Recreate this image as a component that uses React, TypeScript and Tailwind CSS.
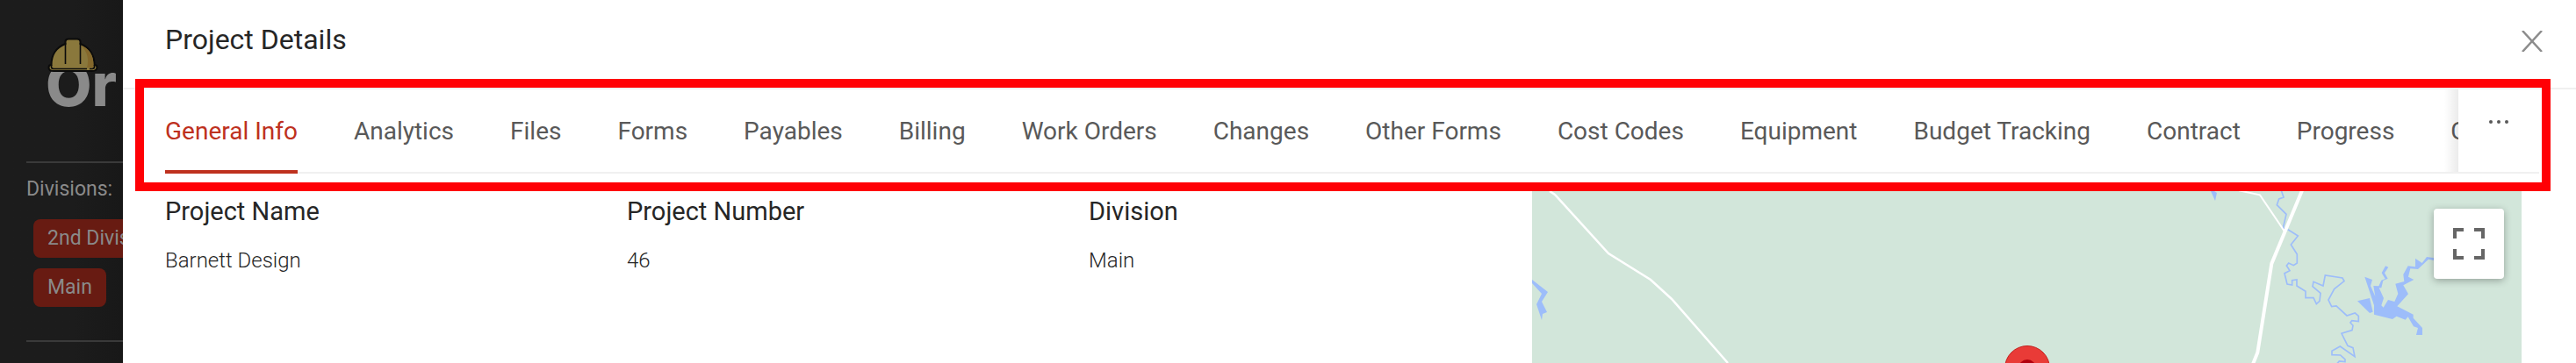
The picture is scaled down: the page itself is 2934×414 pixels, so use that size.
const tabs = ['General Info', 'Analytics', 'Files', 'Forms', 'Payables', 'Billing', 'Work Orders', 'Changes', 'Other Forms', 'Cost Codes', 'Equipment', 'Budget Tracking', 'Contract', 'Progress', 'Change Orders']

const fields = [
  { label: 'Project Name', value: 'Barnett Design' },
  { label: 'Project Number', value: '46' },
  { label: 'Division', value: 'Main' },
]

const divisions = ['2nd Division', 'Main']

const HardHat = () => (
  <svg viewBox="0 0 58 40" className="absolute top-[43px] left-[54px] z-10 h-10 w-[58px]" aria-hidden="true">
    <path
      d="M4.500 31C4.500 20 10 11 20.500 7V4.500Q20.500 1.500 24 1.500H34Q37.500 1.500 37.500 4.500V7C48 11 53.500 20 53.500 31Q56.500 31 56.500 34Q56 38 51 38H7Q1.500 38 1.500 34Q1.500 31 4.500 31Z"
      fill="#8a783c"
      stroke="#0b0b0b"
      strokeWidth="2"
    />
    <path d="M38.500 9C47 12 52.500 20 52.500 31V34H45Q49 20 38.500 9Z" fill="#84682c" />
    <path d="M20.500 6V30M37.500 6V30M4.500 31V33Q4.500 35.500 7 35.500H45M48 35.500H51Q53.500 35.500 53.500 33V31" fill="none" stroke="#0b0b0b" strokeWidth="1.600" />
  </svg>
)

const Sidebar = () => (
  <aside className="w-[140px] shrink-0 overflow-hidden bg-linear-to-r from-[#1c1c1c] from-60% to-[#181818] pl-[30px] whitespace-nowrap text-[#8a8a8a]">
    <div className="relative -ml-[30px] h-[184px]">
      <HardHat />
      <div className="pt-[62px] pl-[52px] font-[Inter,sans-serif] text-[68px] leading-[68px] font-extrabold">
        Or
      </div>
    </div>
    <div className="border-y-2 border-[#3a3a3a] pt-3 pb-[38px]">
      <p className="text-[23px] leading-9">Divisions:</p>
      <div className="mt-4 flex flex-col items-start gap-3 pl-2">
        {divisions.map((name) => (
          <button key={name} className="h-11 rounded-lg bg-[#681b12] px-4 text-[23px] leading-[44px]">
            {name}
          </button>
        ))}
      </div>
    </div>
  </aside>
)

const TabBar = () => (
  <nav className="mr-[42px] ml-12 flex h-24 border-b-2 border-[#f0f0f0]">
    <div className="-mb-[2px] flex min-w-0 flex-1 gap-16 overflow-hidden whitespace-nowrap">
      {tabs.map((tab, i) => (
        <button
          key={tab}
          className={
            i === 0
              ? 'shrink-0 border-b-4 border-[#be311e] pt-1 text-[28px] leading-8 text-[#be311e]'
              : 'shrink-0 border-b-4 border-transparent pt-1 text-[28px] leading-8 text-[#595959]'
          }
        >
          {tab}
        </button>
      ))}
    </div>
    <button
      aria-label="More tabs"
      className="relative flex w-[92px] shrink-0 justify-center bg-white pt-[34px] before:absolute before:inset-y-0 before:right-full before:w-4 before:bg-linear-to-r before:from-transparent before:to-black/8"
    >
      <svg viewBox="0 0 24 6" className="h-[6px] w-6" fill="#595959">
        <circle cx="3" cy="3" r="2" />
        <circle cx="12" cy="3" r="2" />
        <circle cx="21" cy="3" r="2" />
      </svg>
    </button>
  </nav>
)

const SiteMap = () => (
  <div className="relative h-full overflow-hidden bg-[#d2e6da]">
    <svg viewBox="0 0 1127 196" preserveAspectRatio="xMaxYMin slice" className="block h-full w-full" aria-label="Map">
      <path d="M0 101L18 115L11 126L17 138L12 140L11 147L5 129L11 117L0 105Z" fill="#9dbdfa" />
      <path d="M773 0H777L780 2L778 11Z" fill="#9dbdfa" />
      <path d="M20 0L26 4L87 71L135 101L159 123L223 196" fill="none" stroke="#fff" strokeWidth="2.500" />
      {/* river and lake */}
      <g transform="translate(805 -8) scale(0.3333)">
        <path
          d="M145 22L153 45L137 51L130 71L162 103L151 150L170 157L202 177L178 207L199 240V270L187 278L170 270L163 279L174 296L156 305L165 342L182 345V329L198 327V348L228 367V389H255L265 410L276 400L279 373L252 350L255 334L288 348L295 312L354 321L360 332L326 359L306 396L317 419L333 417L369 450L397 441L409 451V470L386 467L381 474L390 484L387 500L351 511L372 553L390 560L396 590L346 555L318 571V584L347 585L363 600V608L343 606L336 614"
          fill="none"
          stroke="#9dbdfa"
          strokeWidth="5"
        />
        <path
          d="M430 317L456 327L450 348L466 384L460 348L478 349L487 329L500 324L488 304L501 280L511 284L498 304L509 323L493 330L487 355H479L495 390L487 415L494 422L510 396L532 402L544 375L535 341L565 333L562 309L578 280L603 283V254L626 270L642 249L670 253V262L648 257L612 291L586 289L579 317L598 327L562 346L579 376L541 418L596 446V458L627 492V516H606L612 492L597 487L578 454L569 464L539 452L525 462L462 446V414Z"
          fill="#9dbdfa"
        />
        <path d="M405 400L447 390L458 437L447 441Z" fill="#9dbdfa" />
        <path d="M0 22L72 37L155 160" fill="none" stroke="#fff" strokeWidth="6" />
        <path d="M216 22L112 272L64 576L48 616" fill="none" stroke="#fff" strokeWidth="12" />
      </g>
      {/* pin */}
      <circle cx="564" cy="202" r="25.500" fill="#e93b37" stroke="#c5221f" />
      <circle cx="564" cy="202" r="10" fill="#b1000e" />
    </svg>
    <button
      aria-label="Toggle fullscreen view"
      className="absolute top-5 right-5 flex size-20 items-center justify-center rounded bg-white shadow-[0_2px_8px_rgba(0,0,0,0.3)]"
    >
      <svg viewBox="0 0 36 36" className="size-9" fill="none" stroke="#666" strokeWidth="4">
        <path d="M2 12V2H12M24 2H34V12M34 24V34H24M12 34H2V24" />
      </svg>
    </button>
  </div>
)

const App = () => {
  return (
    <div className="flex min-h-screen overflow-hidden bg-white font-[Roboto,sans-serif]">
      <Sidebar />
      <main className="relative flex min-w-0 flex-1 flex-col">
        <header className="flex h-[102px] items-center justify-between border-b-2 border-[#f0f0f0] pr-[38px] pb-2.5 pl-12">
          <h1 className="text-[32px] leading-11 text-[#262626]">Project Details</h1>
          <button aria-label="Close" className="pt-1">
            <svg viewBox="0 0 24 24" className="size-6" stroke="#8c8c8c" strokeWidth="2.500">
              <path d="M1 0L23 24M23 0L1 24" />
            </svg>
          </button>
        </header>
        <TabBar />
        <section className="mr-[62px] ml-12 grid flex-1 grid-cols-[1557fr_1127fr] pt-5">
          <dl className="grid grid-cols-[526fr_526fr_505fr] pt-[5px]">
            {fields.map((field) => (
              <div key={field.label}>
                <dt className="text-[29px] leading-9 text-[#262626]">{field.label}</dt>
                <dd className="mt-5 text-[24px] leading-9 font-light text-[#262626]">{field.value}</dd>
              </div>
            ))}
          </dl>
          <SiteMap />
        </section>
        {/* highlight frame around the tabs */}
        <div className="pointer-events-none absolute top-[90px] right-[29px] left-[14px] z-20 h-32 border-10 border-[#ff0005]" />
      </main>
    </div>
  )
}

export default App
